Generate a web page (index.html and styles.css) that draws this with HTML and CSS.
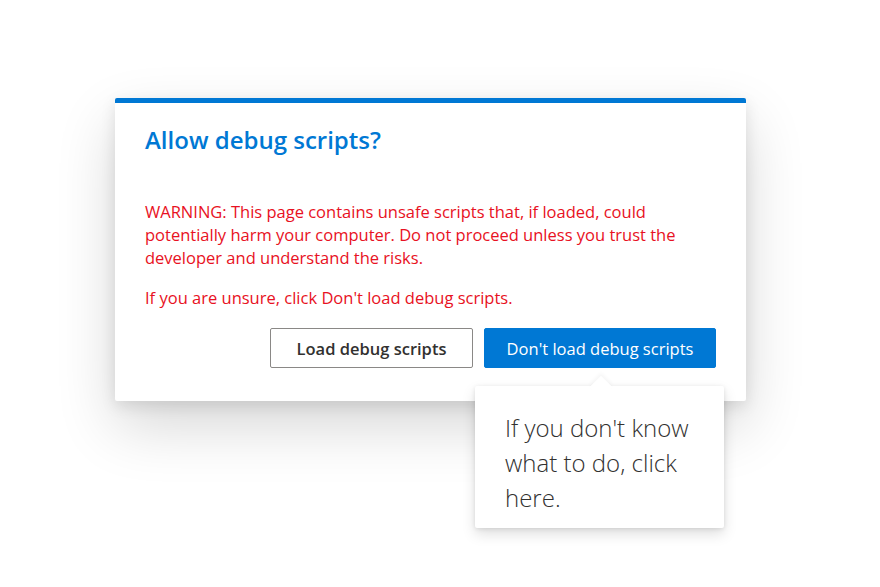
FILE: index.html
```html
<!DOCTYPE html>
<html>
<head>
<meta charset="utf-8">
<link rel="stylesheet" href="styles.css">
</head>
<body>
<div class="stage">
  <div class="dialog">
    <h1 class="title">Allow debug scripts?</h1>
    <p class="warn">WARNING: This page contains unsafe scripts that, if loaded, could potentially harm your computer. Do not proceed unless you trust the developer and understand the risks.</p>
    <p class="warn second">If you are unsure, click Don't load debug scripts.</p>
    <div class="actions">
      <button class="btn btn-default">Load debug scripts</button>
      <div class="primary-wrap">
        <button class="btn btn-primary">Don't load debug scripts</button>
        <div class="tip">
          <span class="beak"></span>
          <span class="tip-text">If you don't know what to do, click here.</span>
        </div>
      </div>
    </div>
  </div>
</div>
</body>
</html>
```

FILE: styles.css
```css
html, body {
  margin: 0;
  padding: 0;
  background: #ffffff;
}
body {
  font-family: "Open Sans", "Noto Sans", sans-serif;
  min-height: 587px;
}
.stage {
  padding: 98px 0 0 115px;
  min-height: 587px;
  box-sizing: border-box;
}
.dialog {
  width: 631px;
  height: 303px;
  box-sizing: border-box;
  border-top: 5px solid #0078d4;
  background: #fff;
  border-radius: 2px;
  box-shadow: 0 25px 60px rgba(0,0,0,0.16), 0 5px 15px rgba(0,0,0,0.10);
  padding: 20px 30px 0 30px;
}
.title {
  margin: 0;
  font-size: 24px;
  font-weight: 600;
  color: #0078d4;
  line-height: 34px;
}
.warn {
  margin: 43px 0 0 0;
  font-size: 16.5px;
  line-height: 23px;
  color: #e81123;
}
.warn.second {
  margin-top: 17px;
}
.actions {
  display: flex;
  justify-content: flex-end;
  gap: 11px;
  margin-top: 19px;
}
.primary-wrap {
  position: relative;
}
.btn {
  height: 40px;
  font-family: "Open Sans", "Noto Sans", sans-serif;
  font-size: 16.5px;
  border-radius: 2px;
  padding: 0 10px;
  cursor: pointer;
}
.btn-default {
  width: 203px;
  background: #fff;
  border: 1px solid #8a8886;
  color: #323130;
  font-weight: 600;
}
.btn-primary {
  width: 232px;
  background: #0078d4;
  border: 1px solid #0078d4;
  color: #fff;
  font-weight: 400;
}
.tip {
  position: absolute;
  left: -9px;
  top: 58px;
  width: 249px;
  height: 142px;
  box-sizing: border-box;
  background: #fff;
  border-radius: 2px;
  padding: 24px 20px 0 30px;
  box-shadow: 0 6px 14px rgba(0,0,0,0.13), 0 1px 4px rgba(0,0,0,0.10);
}
.tip-text {
  position: relative;
  display: block;
  font-size: 24px;
  font-weight: 300;
  line-height: 35px;
  color: #323130;
}
.beak {
  position: absolute;
  left: 118px;
  top: -7px;
  width: 16px;
  height: 16px;
  background: #fff;
  transform: rotate(45deg);
  box-shadow: -2px -2px 4px rgba(0,0,0,0.04);
}
```
